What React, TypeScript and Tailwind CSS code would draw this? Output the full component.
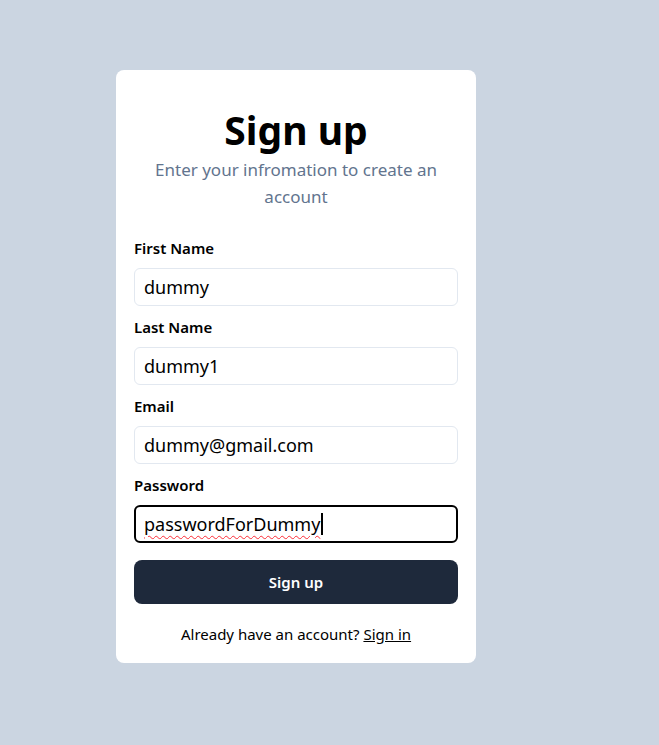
import React from "react";

function Field({ label, value }: { label: string; value: string }) {
  return (
    <div className="flex flex-col">
      <label className="pt-[11px] pb-[10px] text-[15px] leading-[20px] font-semibold text-black">{label}</label>
      <input
        readOnly
        value={value}
        className="h-[38px] w-full rounded-md border border-slate-200 px-[9px] text-[18px] text-black outline-none"
      />
    </div>
  );
}

export default function App() {
  return (
    <div
      className="min-h-[745px] w-full bg-[#cbd5e1] pt-[70px] pl-[116px]"
      style={{ fontFamily: '"Noto Sans", "Open Sans", sans-serif' }}
    >
      <div className="flex w-[360px] flex-col rounded-lg bg-white px-[18px] pt-[40px] pb-[19px]">
        <h1 className="text-center text-[39px] leading-[40px] font-bold text-black">Sign up</h1>
        <p className="mt-[6px] px-4 text-center text-[17px] leading-[27px] text-slate-500">
          Enter your infromation to create an account
        </p>
        <div className="mt-[17px] flex flex-col">
          <Field label="First Name" value="dummy" />
          <Field label="Last Name" value="dummy1" />
          <Field label="Email" value="dummy@gmail.com" />
          <div className="flex flex-col">
            <label className="pt-[11px] pb-[10px] text-[15px] leading-[20px] font-semibold text-black">Password</label>
            <div className="flex h-[38px] w-full items-center rounded-md border-2 border-black px-[8px] text-[18px] text-black">
              <span className="underline decoration-wavy decoration-red-500 decoration-1 underline-offset-[4px]">passwordForDummy</span>
              <span className="ml-[1px] h-[22px] w-[2px] bg-black" />
            </div>
          </div>
        </div>
        <button className="mt-[17px] h-[44px] w-full rounded-lg bg-[#1e293b] text-[15px] font-semibold text-white">
          Sign up
        </button>
        <p className="mt-[20px] text-center text-[15px] leading-[20px] text-black">
          Already have an account? <a className="underline cursor-pointer">Sign in</a>
        </p>
      </div>
    </div>
  );
}
